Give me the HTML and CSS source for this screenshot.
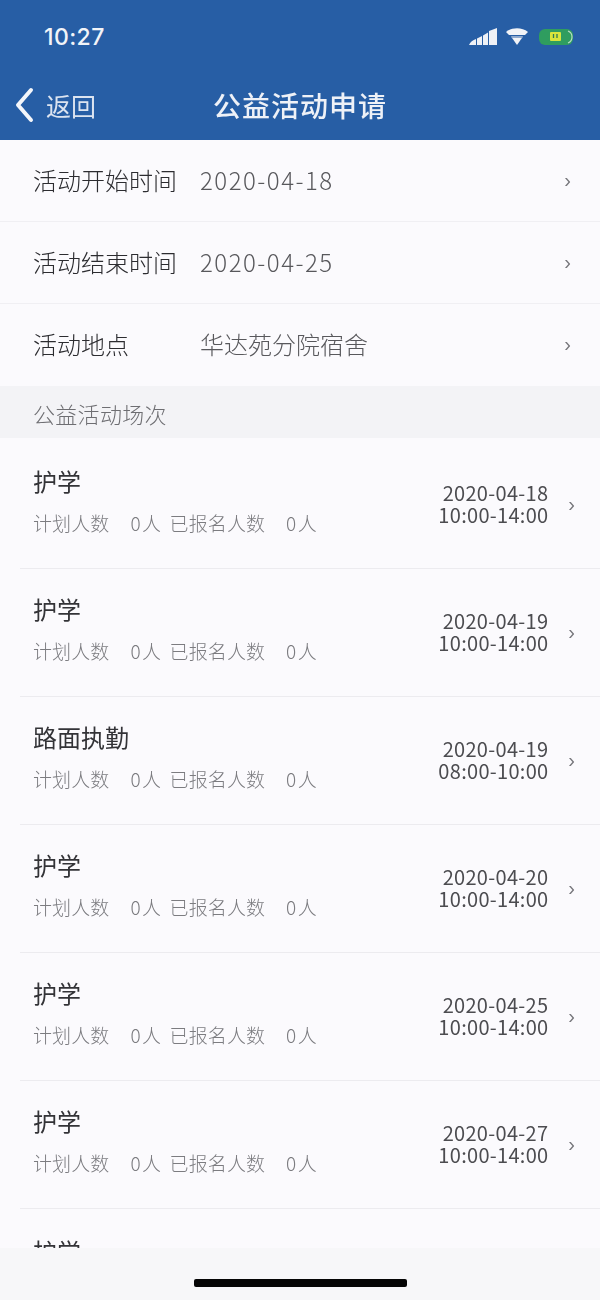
FILE: index.html
```html
<!DOCTYPE html>
<html lang="zh-CN">
<head>
<meta charset="utf-8">
<title>公益活动申请</title>
<link rel="stylesheet" href="styles.css">
</head>
<body>
<div class="page">
  <header class="top">
    <div class="status">
      <span class="time">10:27</span>
      <span class="status-icons">
        <svg class="signal" width="28" height="18" viewBox="0 0 28 18"><path d="M0 17c1-3 4-5 7-6v6zM8 17v-6.500l5-2.500v9zM14 17V7.500L19 4.500V17zM20 17V3l8-3v17z" fill="#eef1f6"/></svg>
        <svg class="wifi" width="22" height="18" viewBox="0 0 22 18"><path d="M0 4c6-5 16-5 22 0l-3 3H3z" fill="#f1f3f7"/><path d="M5 8.500h12l-6 8.500z" fill="#f1f3f7"/><path d="M6 9.300h10" stroke="#8ca6cc" stroke-width="1.300"/></svg>
        <svg class="battery" width="35" height="18" viewBox="0 0 35 18"><rect x="0" y="1" width="34" height="16" rx="6" fill="#2f9d5f"/><path d="M29 3c2.500 1 4 3 4 6s-1.500 5-4 6" fill="none" stroke="#b8dcc4" stroke-width="1.200"/><rect x="11" y="4" width="11" height="9" rx="1" fill="#d8e43c"/><path d="M14.500 6v4M18 6v4" stroke="#2d7b55" stroke-width="1.300"/></svg>
      </span>
    </div>
    <nav class="nav">
      <a class="back" href="#">
        <svg class="back-icon" width="20" height="36" viewBox="0 0 20 36"><path d="M17 3 4 18l13 15" fill="none" stroke="#f4f6fa" stroke-width="4" stroke-linecap="round" stroke-linejoin="round"/></svg>
        <span>返回</span>
      </a>
      <h1 class="title">公益活动申请</h1>
    </nav>
  </header>

  <main class="content">
    <section class="form">
      <div class="field">
        <span class="label">活动开始时间</span>
        <span class="value value-date">2020-04-18</span>
        <span class="chev">›</span>
      </div>
      <div class="field">
        <span class="label">活动结束时间</span>
        <span class="value value-date">2020-04-25</span>
        <span class="chev">›</span>
      </div>
      <div class="field field-last">
        <span class="label">活动地点</span>
        <span class="value">华达苑分院宿舍</span>
        <span class="chev">›</span>
      </div>
    </section>

    <div class="section-head">公益活动场次</div>

    <section class="sessions">
      <div class="session">
        <div class="info">
          <div class="name">护学</div>
          <div class="meta"><span class="meta-a">计划人数</span><span class="meta-b">0人</span><span class="meta-a">已报名人数</span><span class="meta-b">0人</span></div>
        </div>
        <div class="when">2020-04-18<br>10:00-14:00</div>
        <span class="chev">›</span>
      </div>
      <div class="session">
        <div class="info">
          <div class="name">护学</div>
          <div class="meta"><span class="meta-a">计划人数</span><span class="meta-b">0人</span><span class="meta-a">已报名人数</span><span class="meta-b">0人</span></div>
        </div>
        <div class="when">2020-04-19<br>10:00-14:00</div>
        <span class="chev">›</span>
      </div>
      <div class="session">
        <div class="info">
          <div class="name">路面执勤</div>
          <div class="meta"><span class="meta-a">计划人数</span><span class="meta-b">0人</span><span class="meta-a">已报名人数</span><span class="meta-b">0人</span></div>
        </div>
        <div class="when">2020-04-19<br>08:00-10:00</div>
        <span class="chev">›</span>
      </div>
      <div class="session">
        <div class="info">
          <div class="name">护学</div>
          <div class="meta"><span class="meta-a">计划人数</span><span class="meta-b">0人</span><span class="meta-a">已报名人数</span><span class="meta-b">0人</span></div>
        </div>
        <div class="when">2020-04-20<br>10:00-14:00</div>
        <span class="chev">›</span>
      </div>
      <div class="session">
        <div class="info">
          <div class="name">护学</div>
          <div class="meta"><span class="meta-a">计划人数</span><span class="meta-b">0人</span><span class="meta-a">已报名人数</span><span class="meta-b">0人</span></div>
        </div>
        <div class="when">2020-04-25<br>10:00-14:00</div>
        <span class="chev">›</span>
      </div>
      <div class="session">
        <div class="info">
          <div class="name">护学</div>
          <div class="meta"><span class="meta-a">计划人数</span><span class="meta-b">0人</span><span class="meta-a">已报名人数</span><span class="meta-b">0人</span></div>
        </div>
        <div class="when">2020-04-27<br>10:00-14:00</div>
        <span class="chev">›</span>
      </div>
      <div class="session session-cut">
        <div class="info">
          <div class="name">护学</div>
        </div>
      </div>
    </section>
  </main>

  <footer class="home-bar"><span class="home-indicator"></span></footer>
</div>
</body>
</html>
```
FILE: styles.css
```css
* { box-sizing: border-box; margin: 0; padding: 0; }
html, body { height: 100%; }
body {
  font-family: "Noto Sans CJK SC", "Noto Sans", "Liberation Sans", sans-serif;
  background: #fbfafd;
  color: #333;
}
.page {
  width: 600px;
  height: 1300px;
  display: flex;
  flex-direction: column;
  overflow: hidden;
  filter: blur(0.45px);
}
.top {
  flex: 0 0 140px;
  background: #275ea5;
  color: #f2f4f8;
  padding: 0 26px 0 14px;
  display: flex;
  flex-direction: column;
}
.status {
  height: 74px;
  display: flex;
  align-items: center;
  justify-content: space-between;
  padding-left: 30px;
}
.time {
  font-family: "Inter", "Liberation Sans", sans-serif;
  font-size: 23px;
  font-weight: 500;
  line-height: 26px;
  letter-spacing: 0.4px;
}
.status-icons { display: flex; align-items: center; gap: 9px; }
.battery { margin-left: 2px; }
.nav {
  position: relative;
  height: 66px;
  display: flex;
  align-items: flex-start;
}
.back {
  display: flex;
  align-items: center;
  gap: 12px;
  color: #dce4f0;
  text-decoration: none;
  font-size: 25px;
  line-height: 36px;
  margin-top: 13px;
}
.title {
  position: absolute;
  left: 199px;
  top: 12px;
  font-size: 28px;
  line-height: 38px;
  font-weight: 500;
  letter-spacing: 1px;
  color: #eef1f7;
  white-space: nowrap;
}
.content { flex: 1 1 auto; min-height: 0; overflow: hidden; }
.field {
  height: 82px;
  padding: 0 29px 2px 33px;
  display: flex;
  align-items: center;
  border-bottom: 1px solid #f0eff3;
}
.field-last { border-bottom: 0; }
.label { flex: 0 0 167px; font-size: 24px; line-height: 32px; font-weight: 300; color: #2c2c30; }
.value { flex: 1 1 auto; font-size: 24px; line-height: 32px; font-weight: 300; color: #58585c; }
.value-date { letter-spacing: 1.5px; }
.chev { flex: 0 0 auto; font-size: 20px; line-height: 24px; color: #77777c; font-family: "Liberation Sans", sans-serif; }
.section-head {
  height: 52px;
  padding-left: 33px;
  background: #f3f3f6;
  font-size: 22px;
  font-weight: 300;
  line-height: 54px;
  letter-spacing: 0.3px;
  color: #6e6e72;
}
.session {
  height: 128px;
  margin-left: 20px;
  padding: 0 25px 2px 13px;
  display: flex;
  align-items: center;
  border-bottom: 1px solid #ecebef;
}
.session:first-child { height: 131px; padding-top: 3px; }
.session-cut { align-items: flex-start; padding-top: 27px; border-bottom: 0; }
.info { flex: 1 1 auto; padding-bottom: 6px; }
.name { font-size: 24px; line-height: 34px; color: #333337; position: relative; top: -2px; }
.meta { margin-top: 10px; display: flex; font-size: 19px; line-height: 26px; font-weight: 300; color: #7c7c80; }
.meta-a { letter-spacing: 0.1px; }
.meta-b { margin: 0 7px 0 21px; letter-spacing: 1.5px; }
.when {
  flex: 0 0 auto;
  width: 110px;
  margin-right: 20px;
  text-align: right;
  font-size: 20px;
  line-height: 22px;
  color: #4c4c50;
  white-space: nowrap;
  letter-spacing: 0.3px;
}
.home-bar {
  flex: 0 0 52px;
  background: #f7f7f9;
  display: flex;
  justify-content: center;
  padding-top: 31px;
}
.home-indicator {
  width: 213px;
  height: 8px;
  border-radius: 2px;
  background: #050505;
}
```
